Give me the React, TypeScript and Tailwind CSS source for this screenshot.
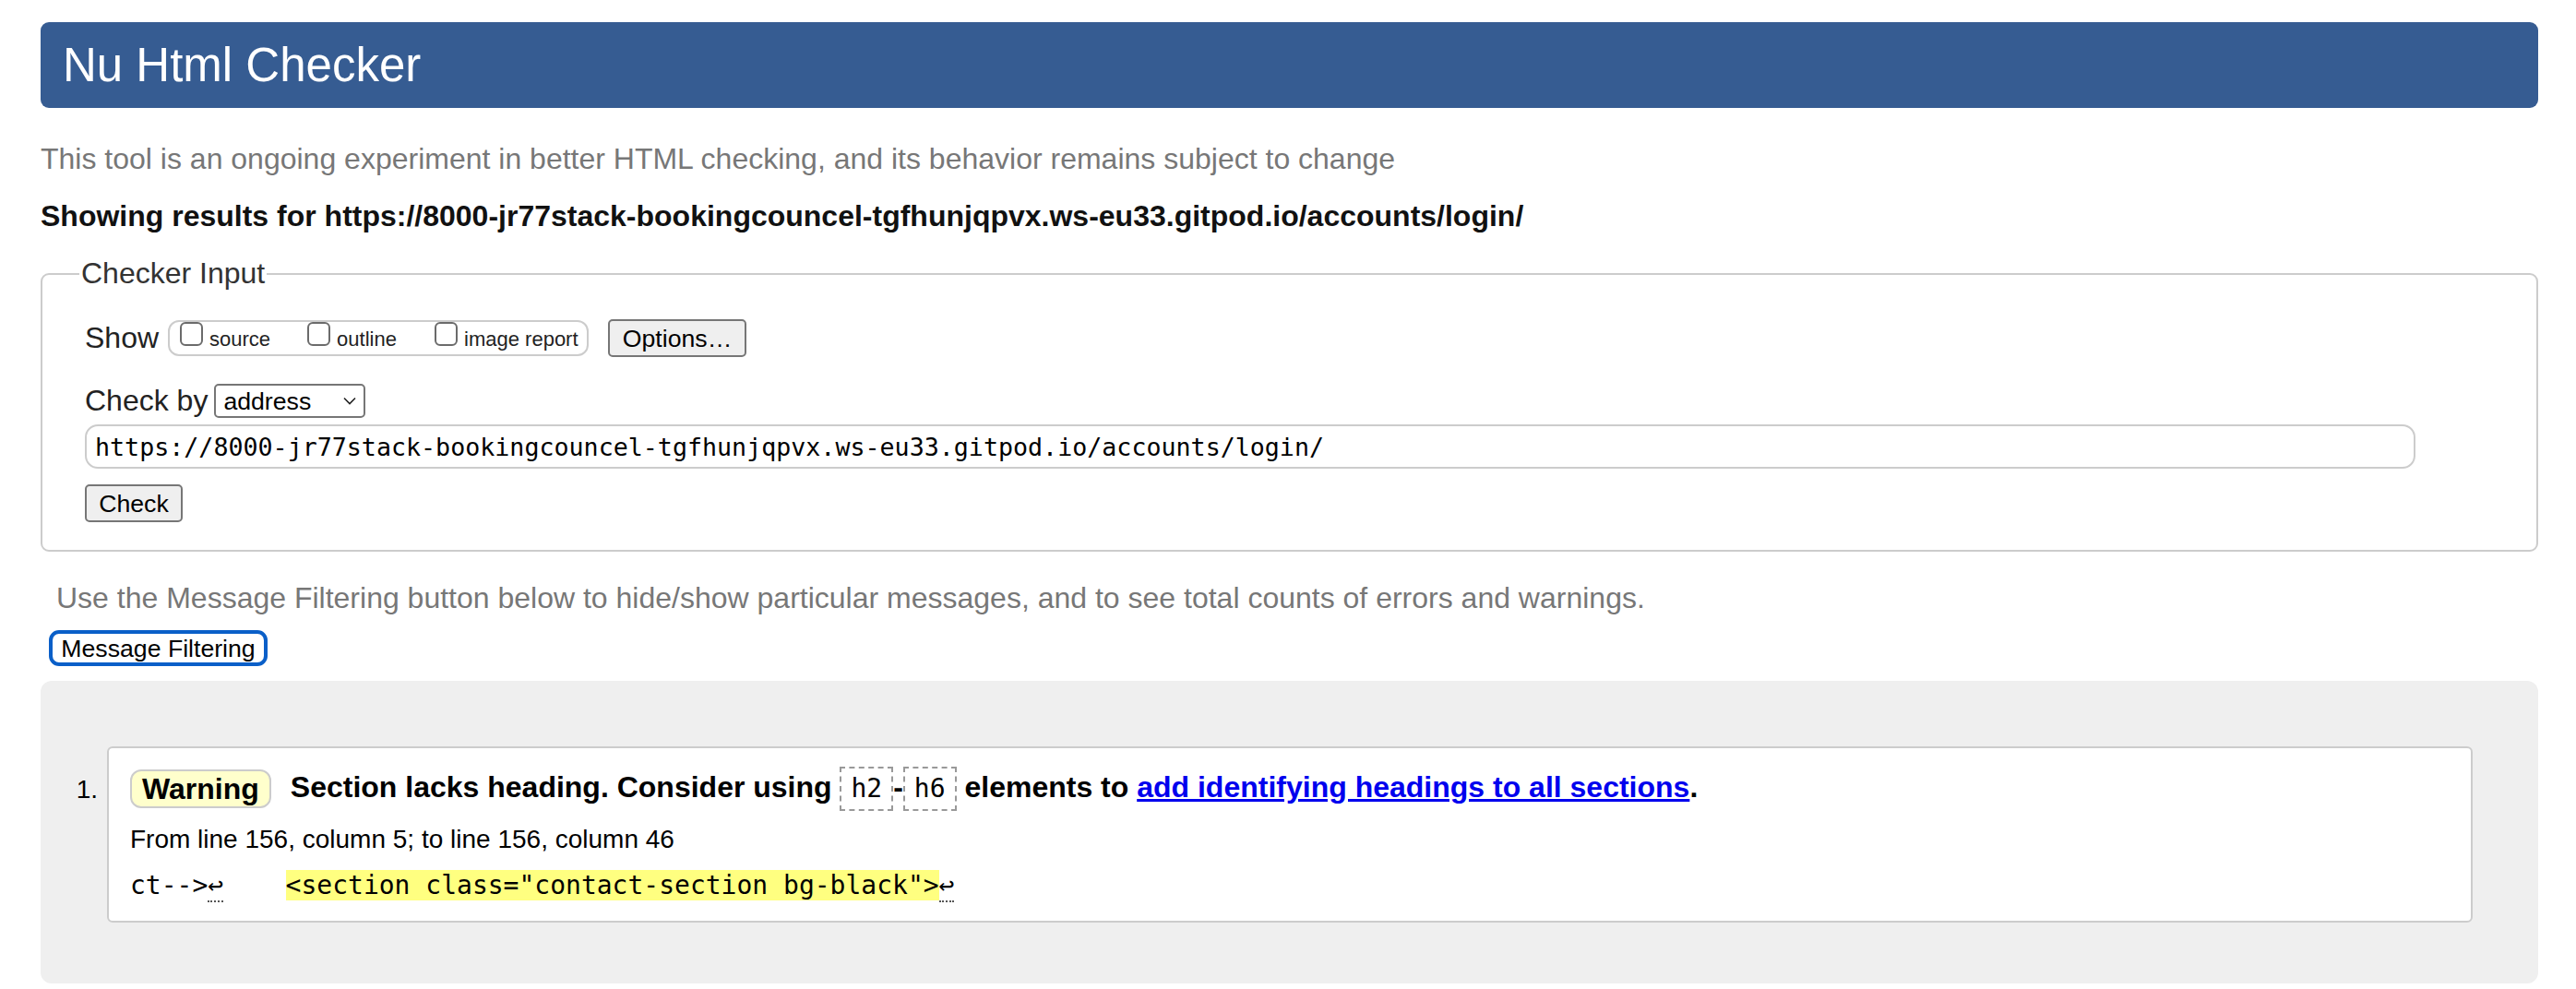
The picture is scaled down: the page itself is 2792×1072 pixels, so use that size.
import React from 'react';

const url = 'https://8000-jr77stack-bookingcouncel-tgfhunjqpvx.ws-eu33.gitpod.io/accounts/login/';

const Checkbox = ({ label, wide }: { label: string; wide?: boolean }) => (
  <div className={wide ? 'flex items-start' : 'flex items-start w-[138px]'}>
    <span className="block w-[25px] h-[26px] border-2 border-[#6b6b6b] rounded-[6px] bg-white" />
    <span className="ml-[7px] mt-[6px] text-[22px] leading-[25px] text-[#222]">{label}</span>
  </div>
);

export default function App() {
  return (
    <div className="min-h-screen bg-white font-['Liberation_Sans',Arial,sans-serif] text-[32px] leading-[37px] text-[#222]">
      <div className="ml-[44px] w-[2707px] pt-[24px] flex flex-col items-start">
        {/* Header */}
        <h1 className="w-full h-[93px] rounded-[9px] bg-[#365c92] pl-[24px] flex items-center text-[51px] font-normal text-white">
          Nu Html Checker
        </h1>

        <p className="mt-[37px] text-[#777]">
          This tool is an ongoing experiment in better HTML checking, and its behavior remains subject to change
        </p>
        <p className="mt-[25px] font-bold text-[#111]">Showing results for {url}</p>

        {/* Checker input */}
        <fieldset className="mt-[25px] w-full border-2 border-[#ccc] rounded-[9px] pl-[46px] pb-[30px]">
          <legend className="-ml-[6px] px-[2px] text-[#333]">Checker Input</legend>

          <div className="mt-[31px] flex items-center h-[41px]">
            <span>Show</span>
            <div className="ml-[10px] h-[39px] w-[456px] border-2 border-[#ccc] rounded-[12px] flex items-start pl-[11px]">
              <Checkbox label="source" />
              <Checkbox label="outline" />
              <Checkbox label="image report" wide />
            </div>
            <button className="ml-[21px] w-[150px] h-[41px] border-2 border-[#767676] rounded-[5px] bg-[#efefef] text-[26.67px] leading-[30px] text-black">
              Options…
            </button>
          </div>

          <div className="mt-[29px] flex items-center h-[37px]">
            <span>Check by</span>
            <div className="ml-[7px] w-[164px] h-[37px] border-2 border-[#767676] rounded-[5px] bg-white flex items-center pl-[8px] pr-[8px] text-[26.67px] leading-[30px] text-black">
              <span>address</span>
              <svg className="ml-auto" width="14" height="9" viewBox="0 0 14 9" fill="none">
                <path d="M1 1.5 L7 7.5 L13 1.5" stroke="#222" strokeWidth="1.6" />
              </svg>
            </div>
          </div>

          <div className="mt-[7px] w-[2526px] h-[48px] border-2 border-[#ccc] rounded-[14px] pl-[9px] flex items-center font-['DejaVu_Sans_Mono',monospace] text-[26.67px] text-black">
            {url}
          </div>

          <button className="block mt-[17px] w-[106px] h-[41px] border-2 border-[#767676] rounded-[5px] bg-[#efefef] text-[26.67px] leading-[30px] text-black">
            Check
          </button>
        </fieldset>

        <p className="mt-[32px] pl-[17px] text-[#777]">
          Use the Message Filtering button below to hide/show particular messages, and to see total counts of errors and warnings.
        </p>
        <button className="mt-[16px] ml-[9px] w-[237px] h-[39px] border-[4px] border-[#0a5fc8] rounded-[11px] bg-white text-[26.67px] leading-[30px] text-black">
          Message Filtering
        </button>

        {/* Results */}
        <div className="mt-[16px] w-full h-[328px] rounded-[12px] bg-[#efefef] pt-[71px] flex items-start">
          <span className="w-[72px] mt-[31px] pr-[10px] text-right text-[28px] leading-[32px] text-black">1.</span>
          <div className="w-[2564px] border-2 border-[#ccc] rounded-[6px] bg-white pl-[23px] pt-[20px] pb-[22px] text-black">
            <div className="flex items-center h-[48px]">
              <span className="h-[42px] px-[11px] border-2 border-[#ccc] rounded-[12px] bg-[#ffffcc] font-bold flex items-center">
                Warning
              </span>
              <span className="ml-[21px] font-bold">
                Section lacks heading. Consider using{' '}
                <code className="inline-block h-[48px] border-2 border-dashed border-[#999] px-[10px] font-['DejaVu_Sans_Mono',monospace] text-[28px] leading-[44px] font-normal">h2</code>
                -
                <code className="inline-block h-[48px] border-2 border-dashed border-[#999] px-[10px] font-['DejaVu_Sans_Mono',monospace] text-[28px] leading-[44px] font-normal">h6</code>{' '}
                elements to{' '}
                <a href="#" className="text-[#0000ee] underline">add identifying headings to all sections</a>.
              </span>
            </div>
            <p className="mt-[15px] text-[28px] leading-[32px]">From line 156, column 5; to line 156, column 46</p>
            <p className="mt-[18px] font-['DejaVu_Sans_Mono',monospace] text-[28px] leading-[32px] whitespace-pre">
              ct--&gt;<span className="border-b-2 border-dotted border-[#555]">↩</span>{'    '}
              <mark className="bg-[#ffff80] text-black">&lt;section class="contact-section bg-black"&gt;</mark>
              <span className="border-b-2 border-dotted border-[#555]">↩</span>
            </p>
          </div>
        </div>
      </div>
    </div>
  );
}
